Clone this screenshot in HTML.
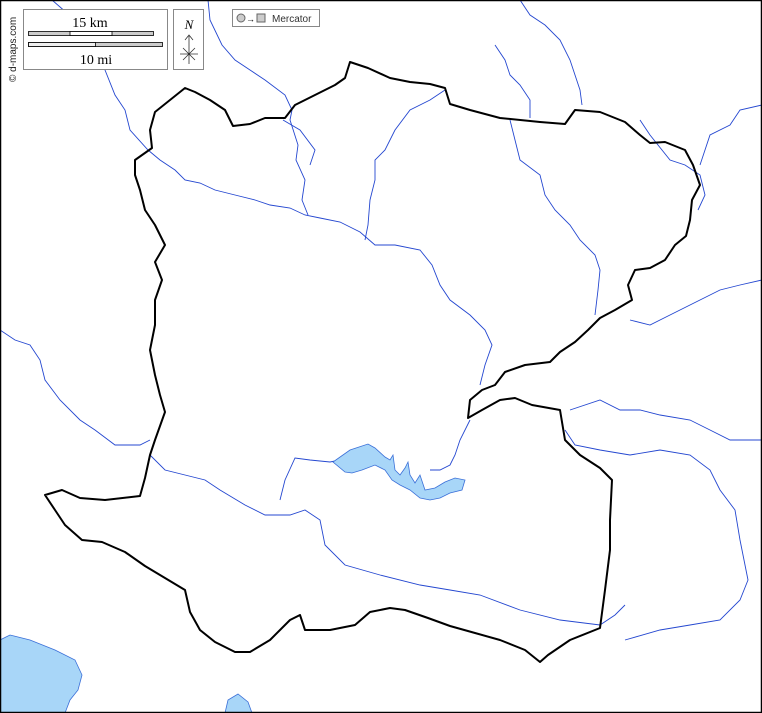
<!DOCTYPE html>
<html><head><style>
html,body{margin:0;padding:0;background:#fff}
svg{display:block}
</style></head><body>
<svg width="762" height="713" viewBox="0 0 762 713" xmlns="http://www.w3.org/2000/svg">
<rect x="0" y="0" width="762" height="713" fill="#fff"/>
<path d="M0,640 L10,635 L30,640 L55,650 L75,660 L82,675 L78,690 L70,700 L65,713 L0,713Z" fill="#a8d6f8" stroke="#3a6fd8" stroke-width="0.8"/>
<path d="M225,713 L228,700 L238,694 L248,702 L252,713Z" fill="#a8d6f8" stroke="#3a6fd8" stroke-width="0.8"/>
<g fill="none" stroke="#2447d0" stroke-width="0.9">
<path d="M52,0 L75,20 L95,40 L105,70 L115,95 L125,110 L130,130 L148,150 L160,160 L175,170 L185,180 L200,183 L215,190 L235,195 L255,200 L270,205 L290,208 L305,215 L320,218 L340,222 L360,232 L375,245 L395,245 L420,250 L432,265 L440,285 L450,300 L470,315 L485,330 L492,345 L485,365 L480,385"/>
<path d="M208,0 L210,20 L222,45 L235,60 L250,70 L265,80 L285,95 L292,110 L290,120 L298,145 L296,160 L305,180 L302,200 L308,215"/>
<path d="M283,120 L300,130 L315,150 L310,165"/>
<path d="M445,90 L430,100 L410,110 L395,130 L385,150 L375,160 L375,180 L370,200 L368,225 L365,240"/>
<path d="M495,45 L505,60 L510,75 L520,85 L530,100 L530,118"/>
<path d="M520,0 L530,15 L545,25 L560,40 L570,60 L575,75 L580,90 L582,105"/>
<path d="M510,120 L515,140 L520,160 L540,175 L545,195 L555,210 L570,225 L580,240 L595,255 L600,270 L598,290 L595,315"/>
<path d="M640,120 L650,135 L670,160 L685,165 L700,175 L705,195 L698,210"/>
<path d="M762,105 L740,110 L730,125 L710,135 L705,150 L700,165"/>
<path d="M630,320 L650,325 L670,315 L700,300 L720,290 L740,285 L762,280"/>
<path d="M0,330 L15,340 L30,345 L40,360 L45,380 L60,400 L80,420 L95,430 L115,445 L140,445 L150,440"/>
<path d="M150,455 L165,470 L185,475 L205,480 L220,490 L245,505 L265,515 L290,515 L305,510 L320,520 L325,545 L345,565 L380,575 L420,585 L450,590 L480,595 L520,610 L560,620 L600,625 L615,615 L625,605"/>
<path d="M280,500 L285,480 L295,458 L310,460 L330,462 L340,460"/>
<path d="M470,420 L460,440 L455,455 L450,465 L440,470 L430,470"/>
<path d="M570,410 L600,400 L620,410 L640,410 L660,415 L690,420 L710,430 L730,440 L762,440"/>
<path d="M565,430 L575,445 L600,450 L630,455 L660,450 L690,455 L710,470 L720,490 L735,510 L740,540 L748,580 L740,600 L720,620 L690,625 L660,630 L625,640"/>
</g>
<path d="M333,462 L350,450 L368,444 L375,448 L385,457 L390,460 L393,455 L395,470 L400,475 L405,468 L408,462 L410,475 L415,483 L420,475 L425,490 L435,488 L445,482 L455,478 L465,480 L462,490 L450,493 L440,498 L430,500 L420,498 L410,490 L400,485 L392,480 L385,470 L375,465 L362,470 L352,473 L345,472Z" fill="#a8d6f8" stroke="#3a6fd8" stroke-width="0.8"/>
<path d="M135,160 L152,148 L150,130 L155,112 L170,100 L185,88 L195,92 L210,100 L225,110 L233,126 L250,124 L265,118 L285,118 L295,105 L315,95 L335,85 L345,78 L350,62 L368,68 L390,78 L410,82 L430,84 L445,88 L450,104 L470,110 L500,118 L540,122 L565,124 L575,110 L600,112 L625,122 L640,135 L650,143 L665,142 L685,150 L693,165 L700,185 L692,200 L690,220 L686,236 L675,245 L665,260 L650,268 L635,270 L628,285 L632,300 L615,310 L600,318 L588,330 L575,342 L560,352 L550,362 L525,365 L505,372 L495,385 L482,390 L470,400 L468,418 L482,410 L500,400 L515,398 L532,405 L560,410 L565,440 L580,455 L600,468 L612,480 L610,520 L610,550 L605,590 L600,628 L570,640 L548,655 L540,662 L525,650 L500,640 L475,633 L450,626 L428,618 L405,610 L390,608 L370,612 L355,625 L330,630 L305,630 L300,615 L290,620 L270,640 L250,652 L235,652 L215,642 L200,630 L190,612 L185,590 L165,578 L145,566 L125,552 L102,542 L82,540 L65,525 L55,510 L45,495 L62,490 L80,498 L105,500 L140,496 L145,478 L150,455 L155,440 L165,412 L160,395 L155,375 L150,350 L155,325 L155,300 L162,280 L155,262 L165,245 L155,225 L145,210 L140,190 L135,175Z" fill="none" stroke="#000" stroke-width="2" stroke-linejoin="round"/>
<rect x="23.5" y="9.5" width="144" height="60" fill="#fff" stroke="#888"/>
<text x="90" y="27" font-family="Liberation Serif, serif" font-size="14" text-anchor="middle">15 km</text>
<rect x="28.5" y="31.5" width="125" height="4" fill="#ccc" stroke="#000" stroke-width="0.8"/>
<rect x="70" y="31.5" width="42" height="4" fill="#fff" stroke="#000" stroke-width="0.8"/>
<rect x="28.5" y="42.5" width="134" height="4" fill="#ccc" stroke="#000" stroke-width="0.8"/>
<rect x="28.5" y="42.5" width="67" height="4" fill="#eee" stroke="#000" stroke-width="0.8"/>
<text x="96" y="64" font-family="Liberation Serif, serif" font-size="14" text-anchor="middle">10 mi</text>
<rect x="173.5" y="9.5" width="30" height="60" fill="#fff" stroke="#888"/>
<text x="189" y="29" font-family="Liberation Serif, serif" font-size="13" font-style="italic" text-anchor="middle">N</text>
<path d="M189,36 L189,64 M185,40 L189,35 L193,40 M180,54 L198,54 M183,48 L195,60 M195,48 L183,60" stroke="#333" stroke-width="0.8" fill="none"/>
<rect x="232.5" y="9.5" width="87" height="17" fill="#fff" stroke="#888"/>
<circle cx="241" cy="18" r="4" fill="#ccc" stroke="#666"/>
<text x="246" y="22" font-family="Liberation Sans, sans-serif" font-size="9">→</text>
<rect x="257" y="14" width="8" height="8" fill="#ccc" stroke="#666"/>
<text x="272" y="22" font-family="Liberation Sans, sans-serif" font-size="10" fill="#333">Mercator</text>
<text transform="translate(16,82) rotate(-90)" font-family="Liberation Sans, sans-serif" font-size="10" fill="#222">© d-maps.com</text>
<rect x="0.5" y="0.5" width="761" height="712" fill="none" stroke="#000" stroke-width="1.5"/>
</svg>
</body></html>
